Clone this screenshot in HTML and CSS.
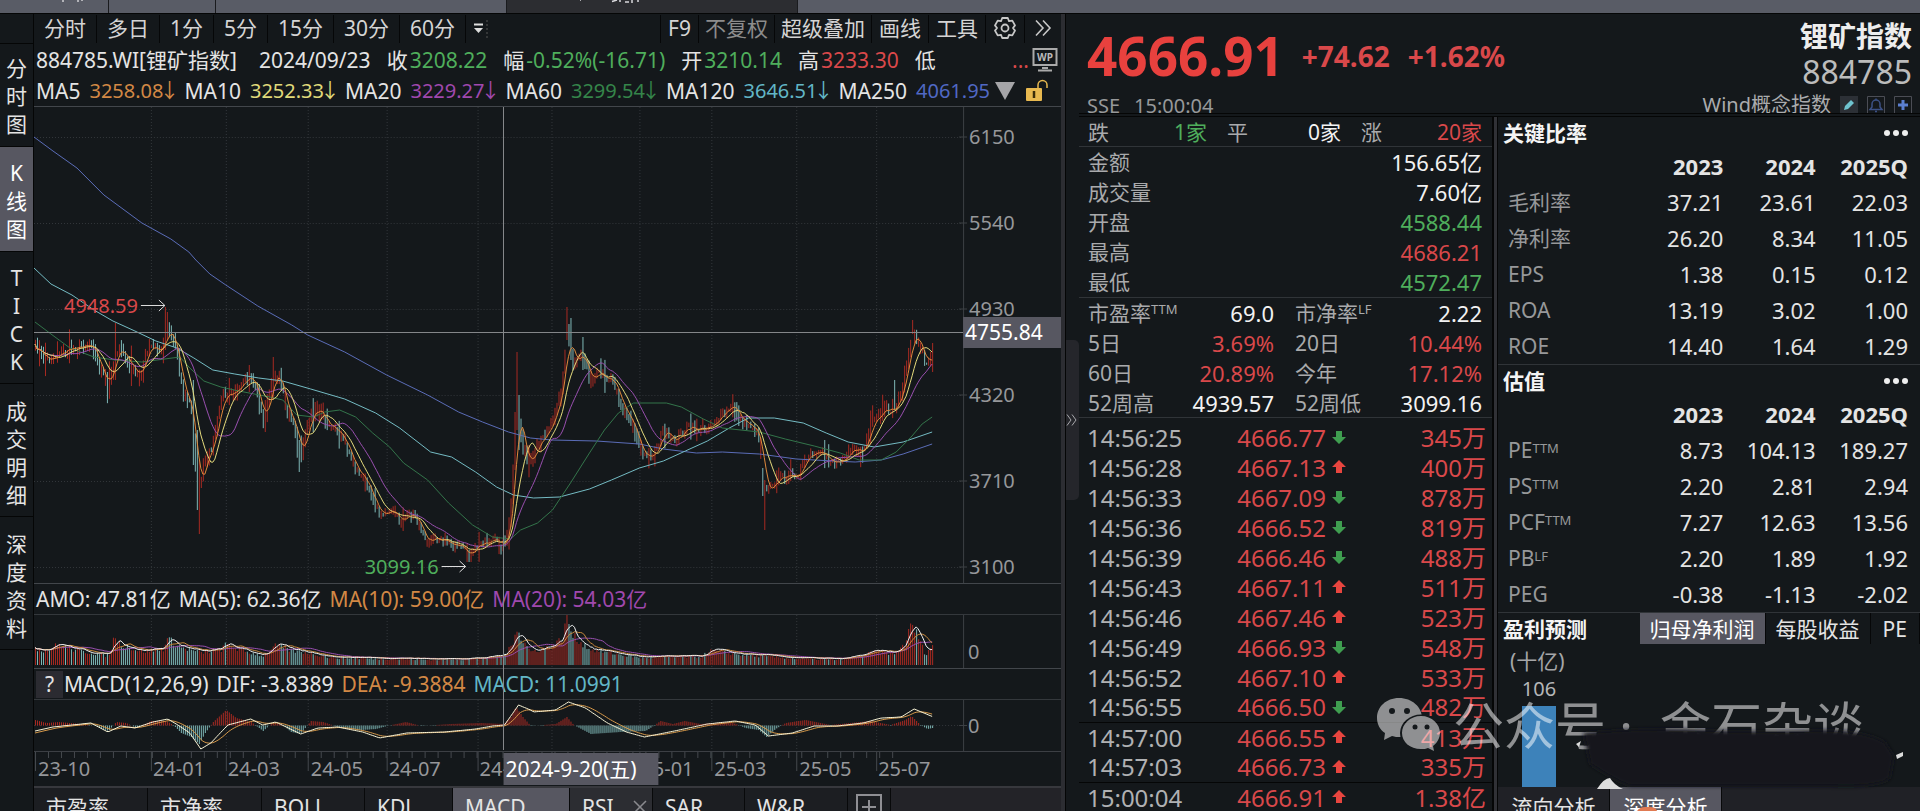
FILE: index.html
```
<!DOCTYPE html>
<html lang="zh-CN">
<head>
    <meta charset="utf-8">
    <title>锂矿指数 884785</title>
    <link rel="stylesheet" href="styles.css">
</head>
<body>
    <div class="window-tabs">
        <span class="wtab wtab-1"><svg width="24" height="2" viewBox="0 0 24 2"><path d="M1 0v2M16 0v2M20 0v1" stroke="#d0d0d4" stroke-width="1.500"/></svg></span>
        <span class="wtab wtab-2"></span>
        <span class="wtab wtab-3"></span>
        <span class="wtab wtab-current"><svg width="64" height="3" viewBox="0 0 64 3"><path d="M0 0v1M32 1.500l5-1.500M40 0v2M45 2h4M52 0v3M58 0v2" stroke="#d8d8dc" stroke-width="1.500"/></svg></span>
        <span class="wtab wtab-rest"></span>
    </div>

    <div class="app">
        <nav class="side">
            <div class="side-top"></div>
            <button class="side-btn">分<br>时<br>图</button>
            <button class="side-btn active">K<br>线<br>图</button>
            <button class="side-btn side-tick">T<br>I<br>C<br>K</button>
            <button class="side-btn side-long">成<br>交<br>明<br>细</button>
            <button class="side-btn side-long">深<br>度<br>资<br>料</button>
        </nav>

        <main class="chart-panel">
            <div class="toolbar">
                <button>分时</button>
                <button>多日</button>
                <button>1分</button>
                <button>5分</button>
                <button>15分</button>
                <button>30分</button>
                <button>60分</button>
                <svg class="more-periods" width="20" height="22" viewBox="0 0 20 22">
                    <path d="M6 6.500h9" stroke="#ddd" stroke-width="2"/>
                    <path d="M6 10h9l-4.500 5z" fill="#ddd"/>
                    <path d="M19 2v20" stroke="#555" stroke-dasharray="2 2"/>
                </svg>
                <span class="spacer"></span>
                <button class="narrow">F9</button>
                <button class="dim">不复权</button>
                <button class="wide">超级叠加</button>
                <button class="narrow">画线</button>
                <button class="narrow">工具</button>
                <button class="icon-btn" aria-label="设置">
                    <svg width="24" height="24" viewBox="0 0 24 24" fill="none" stroke="#c8c8c8" stroke-width="1.800" stroke-linejoin="round">
                        <path d="M9.200 2h5.600l1.200 3.200 3.300-.6 2.700 4.800L20 12l2 2.600-2.700 4.800-3.300-.6-1.200 3.200H9.200L8 18.800l-3.300.6L2 14.600 4 12 2 9.400l2.700-4.800 3.300.6z"/>
                        <circle cx="12" cy="12" r="3.500"/>
                    </svg>
                </button>
                <button class="icon-btn" aria-label="展开">
                    <svg width="20" height="20" viewBox="0 0 20 20" fill="none" stroke="#c8c8c8" stroke-width="1.600">
                        <path d="M3 2.500l7 7.500-7 7.500M10 2.500l7 7.500-7 7.500"/>
                    </svg>
                </button>
            </div>

            <div class="quote-line">
                <span class="q-name">884785.WI[锂矿指数]</span>
                <span class="q-date">2024/09/23</span>
                <span>收<b class="green">3208.22</b></span>
                <span>幅<b class="green">-0.52%(-16.71)</b></span>
                <span>开<b class="green">3210.14</b></span>
                <span>高<b class="red">3233.30</b></span>
                <span>低</span>
                <span class="q-more red">...</span>
                <svg width="26" height="26" viewBox="0 0 26 26">
                    <rect x="1.500" y="2" width="23" height="16" fill="none" stroke="#aaa" stroke-width="2"/>
                    <path d="M10 21h6M6 23.500h14" stroke="#aaa" stroke-width="2"/>
                    <text x="13" y="14" font-size="10" font-weight="700" text-anchor="middle" fill="#bbb">WP</text>
                </svg>
            </div>

            <div class="ma-line">
                <span>MA5</span><span class="orange">3258.08<i>↓</i></span>
                <span>MA10</span><span class="yellow">3252.33<i>↓</i></span>
                <span>MA20</span><span class="purple">3229.27<i>↓</i></span>
                <span>MA60</span><span class="dgreen">3299.54<i>↓</i></span>
                <span>MA120</span><span class="cyan">3646.51<i>↓</i></span>
                <span>MA250</span><span class="blue">4061.95</span>
                <svg class="ma-icons" width="58" height="24" viewBox="0 0 58 24">
                    <path d="M0 3h20L10 21z" fill="#a5a5a8"/>
                    <rect x="31" y="9" width="16" height="13" rx="1" fill="#e8b950"/>
                    <path d="M43 9V6a4.500 4.500 0 0 1 9 0v3" fill="none" stroke="#e8b950" stroke-width="1.500"/>
                    <path d="M39 12v7" stroke="#3a2c0a" stroke-width="2.500"/>
                </svg>
            </div>

            <div class="chart-stack">
                <svg class="pane price-pane" viewBox="33 107 1028 476" preserveAspectRatio="none">
                    <g id="grid-price" class="grid"></g>
                    <g class="axis">
                        <path d="M963.500 107V583M959 137h8M959 223h8M959 309h8M959 395h8M959 481h8M959 567h8"/>
                        <text x="969" y="144">6150</text>
                        <text x="969" y="230">5540</text>
                        <text x="969" y="316">4930</text>
                        <text x="969" y="402">4320</text>
                        <text x="969" y="488">3710</text>
                        <text x="969" y="574">3100</text>
                    </g>
                    <g id="candles"></g>
                    <g class="ma">
                        <polyline stroke="#5a6cb8" points="33,137 52,151 76,168 103,195 141,223 170,239 188,252 195,260 209,274 225,285 257,306 291,325 307,335 344,352 386,375 427,395 458,412 482,422 508,432 530,438 551,440 596,441 639,444 663,449 696,453 722,452 759,454 796,459 833,461 855,462 881,460 903,454 932,444"/>
                        <polyline stroke="#74bcc4" points="33,268 50,284 71,295 93,310 112,321 134,331 155,341 176,348 193,358 212,370 234,374 258,378 282,381 310,389 344,399 375,413 399,428 430,452 451,457 475,472 496,487 513,495 533,498 559,497 589,489 611,480 639,468 663,461 685,451 707,441 729,428 748,418 774,418 803,423 826,433 848,442 874,447 903,442 932,432"/>
                        <polyline stroke="#33744a" points="34,322 50,334 69,348 93,357 114,360 141,362 179,357 189,368 203,381 220,387 238,391 269,397 282,400 296,415 313,417 324,412 339,410 355,417 372,433 389,447 403,463 427,480 448,503 472,525 492,537 510,539 520,530 537,523 552,510 570,483 589,453 604,430 618,413 633,403 666,403 681,407 703,419 722,428 759,432 785,439 814,446 840,453 859,460 881,460 896,452 911,437 922,424 932,417"/>
                        <polyline id="ma20" stroke="#9a4fb0"/>
                        <polyline id="ma10" stroke="#e6dc7c"/>
                        <polyline id="ma5" stroke="#e08a3c"/>
                    </g>
                    <path class="cross" d="M33 332.500H963"/>
                    <text class="mark red" x="63" y="313">4948.59</text>
                    <path class="arrow" d="M140 305.500h24M158 300l6 5.500-6 5.500"/>
                    <text class="mark green" x="364" y="574">3099.16</text>
                    <path class="arrow" d="M441 566.500h24M459 561l6 5.500-6 5.500"/>
                    <rect x="963" y="317" width="98" height="31" fill="#575761"/>
                    <text class="tag" x="965" y="340">4755.84</text>
                </svg>

                <div class="pane-head">
                    <span>AMO: 47.81亿</span>
                    <span>MA(5): 62.36亿</span>
                    <span class="orange">MA(10): 59.00亿</span>
                    <span class="purple">MA(20): 54.03亿</span>
                </div>
                <svg class="pane vol-pane" viewBox="33 615 1028 53" preserveAspectRatio="none">
                    <g id="grid-vol" class="grid"></g>
                    <g id="volume"></g>
                    <g class="ma">
                        <polyline id="vma20" stroke="#9a4fb0"/>
                        <polyline id="vma10" stroke="#c98a3c"/>
                        <polyline id="vma5" stroke="#f2f2f2"/>
                    </g>
                    <g class="axis">
                        <path d="M963.500 615v53"/>
                        <text x="968" y="659">0</text>
                    </g>
                </svg>

                <div class="pane-head">
                    <button class="help">?</button>
                    <span>MACD(12,26,9)</span>
                    <span>DIF: -3.8389</span>
                    <span class="orange">DEA: -9.3884</span>
                    <span class="cyan">MACD: 11.0991</span>
                </div>
                <svg class="pane macd-pane" viewBox="33 700 1028 51" preserveAspectRatio="none">
                    <g id="grid-macd" class="grid"></g>
                    <g id="histogram"></g>
                    <g class="ma">
                        <polyline id="dea" stroke="#d79a4a"/>
                        <polyline id="dif" stroke="#fbf6d8"/>
                    </g>
                    <g class="axis">
                        <path d="M963.500 700v51M959 725.500h8"/>
                        <text x="968" y="733">0</text>
                    </g>
                </svg>
                <div class="cross-v"></div>

                <svg class="pane date-pane" viewBox="33 752 1028 34" preserveAspectRatio="none">
                    <g id="date-ticks" class="date-ticks"></g>
                    <g class="axis">
                        <text x="37" y="776">23-10</text>
                        <text x="152" y="776">24-01</text>
                        <text x="227" y="776">24-03</text>
                        <text x="310" y="776">24-05</text>
                        <text x="388" y="776">24-07</text>
                        <text x="479" y="776">24-09</text>
                        <text x="641" y="776">25-01</text>
                        <text x="714" y="776">25-03</text>
                        <text x="799" y="776">25-05</text>
                        <text x="878" y="776">25-07</text>
                    </g>
                    <rect x="503" y="753" width="155" height="32" fill="#575761"/>
                    <text class="tag" x="505" y="777">2024-9-20(五)</text>
                </svg>
            </div>

            <div class="indicator-tabs">
                <button class="w114">市盈率</button>
                <button class="w114">市净率</button>
                <button class="w103">BOLL</button>
                <button class="w88">KDJ</button>
                <button class="w117 active">MACD</button>
                <button class="w83 closable">RSI
                    <svg width="14" height="14" viewBox="0 0 14 14" stroke="#8a8a8e" stroke-width="1.500"><path d="M1 1l12 12M13 1L1 13"/></svg>
                </button>
                <button class="w92">SAR</button>
                <button class="w103">W&amp;R</button>
                <button class="add" aria-label="添加指标">
                    <svg width="26" height="26" viewBox="0 0 26 26" fill="none" stroke="#8f8f94" stroke-width="2">
                        <path d="M1 1h24v24H1zM13 6v14M6 13h14"/>
                    </svg>
                </button>
            </div>
        </main>

        <div class="splitter"></div>

        <aside class="quote-panel">
            <button class="collapse" aria-label="收起">
                <svg width="12" height="14" viewBox="0 0 12 14" fill="none" stroke="#a8a8ac">
                    <path d="M1 1.500l4 5.500-4 5.500M6 1.500l4 5.500-4 5.500"/>
                </svg>
            </button>

            <div class="quote-main">
                <header class="quote-head">
                    <div class="head-left">
                        <div class="price-row">
                            <span class="price">4666.91</span>
                            <span class="change">+74.62</span>
                            <span class="change">+1.62%</span>
                        </div>
                        <div class="exchange"><span>SSE</span><span>15:00:04</span></div>
                    </div>
                    <div class="head-right">
                        <div class="name">锂矿指数</div>
                        <div class="code">884785</div>
                        <div class="category">
                            <span>Wind概念指数</span>
                            <svg width="18" height="18" viewBox="0 0 18 18">
                                <rect width="18" height="18" fill="#2c3036"/>
                                <path d="M4 14l1-4 6-6 3 3-6 6z" fill="#6fc3cf"/>
                            </svg>
                            <svg width="18" height="18" viewBox="0 0 18 18" fill="none">
                                <path d="M.5.500h17v17H.5z" stroke="#4b4d55"/>
                                <path d="M3 13.500h12l-2-2.500V8a4 4 0 0 0-8 0v3zM8 15.500h2M9 4V2.500" stroke="#3c5186" stroke-width="1.500"/>
                            </svg>
                            <svg width="18" height="18" viewBox="0 0 18 18" fill="none">
                                <path d="M.5.500h17v17H.5z" stroke="#4b4d55"/>
                                <path d="M9 4v10M4 9h10" stroke="#5b7fd0" stroke-width="3"/>
                            </svg>
                        </div>
                    </div>
                </header>

                <div class="quote-body">
                    <section class="detail">
                        <div class="breadth">
                            <span>跌</span><b class="green">1家</b>
                            <span>平</span><b>0家</b>
                            <span>涨</span><b class="red">20家</b>
                        </div>
                        <div class="totals">
                            <span>金额</span><b>156.65亿</b>
                            <span>成交量</span><b>7.60亿</b>
                            <span>开盘</span><b class="green">4588.44</b>
                            <span>最高</span><b class="red">4686.21</b>
                            <span>最低</span><b class="green">4572.47</b>
                        </div>
                        <div class="pairs">
                            <span>市盈率<sup>TTM</sup></span><b>69.0</b><span>市净率<sup>LF</sup></span><b>2.22</b>
                            <span>5日</span><b class="red">3.69%</b><span>20日</span><b class="red">10.44%</b>
                            <span>60日</span><b class="red">20.89%</b><span>今年</span><b class="red">17.12%</b>
                            <span>52周高</span><b>4939.57</b><span>52周低</span><b>3099.16</b>
                        </div>
                        <table class="ticks">
                            <tbody id="ticks"></tbody>
                        </table>
                    </section>

                    <div class="column-split"></div>

                    <section class="ratios">
                        <div class="block">
                            <h2>关键比率 <button class="dots" aria-label="更多"><i></i><i></i><i></i></button></h2>
                            <table>
                                <tr><th></th><th>2023</th><th>2024</th><th>2025Q</th></tr>
                                <tr><td>毛利率</td><td>37.21</td><td>23.61</td><td>22.03</td></tr>
                                <tr><td>净利率</td><td>26.20</td><td>8.34</td><td>11.05</td></tr>
                                <tr><td>EPS</td><td>1.38</td><td>0.15</td><td>0.12</td></tr>
                                <tr><td>ROA</td><td>13.19</td><td>3.02</td><td>1.00</td></tr>
                                <tr><td>ROE</td><td>14.40</td><td>1.64</td><td>1.29</td></tr>
                            </table>
                        </div>
                        <div class="block">
                            <h2>估值 <button class="dots" aria-label="更多"><i></i><i></i><i></i></button></h2>
                            <table>
                                <tr><th></th><th>2023</th><th>2024</th><th>2025Q</th></tr>
                                <tr><td>PE<sup>TTM</sup></td><td>8.73</td><td>104.13</td><td>189.27</td></tr>
                                <tr><td>PS<sup>TTM</sup></td><td>2.20</td><td>2.81</td><td>2.94</td></tr>
                                <tr><td>PCF<sup>TTM</sup></td><td>7.27</td><td>12.63</td><td>13.56</td></tr>
                                <tr><td>PB<sup>LF</sup></td><td>2.20</td><td>1.89</td><td>1.92</td></tr>
                                <tr><td>PEG</td><td>-0.38</td><td>-1.13</td><td>-2.02</td></tr>
                            </table>
                        </div>
                        <div class="forecast">
                            <div class="forecast-head">
                                <h2>盈利预测</h2>
                                <button class="active">归母净利润</button>
                                <button>每股收益</button>
                                <button class="pe">PE</button>
                            </div>
                            <div class="unit">(十亿)</div>
                            <div class="bar-item">
                                <span>106</span>
                                <div class="bar"></div>
                            </div>
                        </div>
                        <div class="analysis-tabs">
                            <button>流向分析</button>
                            <button class="active">深度分析</button>
                        </div>
                    </section>
                </div>
            </div>

            <svg class="watermark" width="543" height="120" viewBox="1377 691 543 120">
                <defs>
                    <filter id="soft" x="-5%" y="-20%" width="110%" height="140%"><feGaussianBlur stdDeviation="2"/></filter>
                    <mask id="bubble">
                        <rect x="1370" y="690" width="90" height="70" fill="#fff"/>
                        <ellipse cx="1421" cy="733" rx="21" ry="18.500" fill="#000"/>
                    </mask>
                </defs>
                <g fill="#fff" opacity=".52">
                    <g mask="url(#bubble)">
                        <path d="M1399 698c-13 0-22 9-22 20 0 6 3 12 8 15l-1 7 8-4c3 1 5 1 8 1 12 0 22-8 22-19s-10-20-23-20z"/>
                    </g>
                    <path d="M1421 716c-11 0-19 8-19 17s8 16 19 16c3 0 5 0 7-1l6 3-1-5c4-3 7-8 7-13 0-9-8-17-19-17z"/>
                    <text class="mark-text" x="1453" y="745">公众号 · </text>
                    <text class="mark-text" x="1660" y="745">金石杂谈</text>
                </g>
                <g fill="#14181b">
                    <circle cx="1392" cy="711" r="3"/><circle cx="1407" cy="711" r="3"/>
                    <circle cx="1415" cy="727" r="2.500"/><circle cx="1427" cy="727" r="2.500"/>
                </g>
                <path d="M1583 733q60-6 120-3t120 0q40 0 62 12l9 14-4 22q-10 10-60 8l-200 0q-20-8-40-22z" fill="#14181b" filter="url(#soft)"/>
                <path d="M1576 744l5-3-2 6zM1597 789q7-11 13-11 4 7 13 11zM1896 755l7-3v4l-6 3z" fill="#dcdcdc"/>
                <path d="M1637 811q3-4 8-4h5q6 0 7 4z" fill="#e07a52"/>
            </svg>
        </aside>
    </div>

    <script src="chart.js"></script>
</body>
</html>
```
FILE: styles.css
```
* {
    box-sizing: border-box;
}
body {
    margin: 0;
    height: 100vh;
    overflow: hidden;
    display: flex;
    flex-direction: column;
    background: #14181b;
    color: #e4e4e4;
    font-family: "Noto Sans", "Noto Sans CJK SC", sans-serif;
    font-size: 21px;
    line-height: 30px;
}
button {
    margin: 0;
    padding: 0;
    border: none;
    background: none;
    color: inherit;
    font: inherit;
    cursor: pointer;
    white-space: nowrap;
}
b, i {
    font-weight: normal;
    font-style: normal;
}
h2 {
    margin: 0;
    font-size: 21px;
    line-height: 32px;
    font-weight: bold;
    color: #f4f4f4;
}

/* Text colours */
.red { color: #d9484a; fill: #d9484a; }
.green { color: #4fae5c; fill: #4fae5c; }
.dgreen { color: #35854a; }
.orange { color: #d28845; }
.yellow { color: #e0da7a; }
.purple { color: #a048ae; }
.cyan { color: #62b6c6; }
.blue { color: #5068c4; }

/* Window tabs on top */
.window-tabs {
    flex: none;
    display: flex;
    height: 13px;
    background: #595c66;
}
.wtab {
    display: flex;
    align-items: flex-start;
    justify-content: center;
    border-right: 1px solid #1a1b1e;
}
.wtab-1 {
    width: 109px;
    padding-left: 40px;
}
.wtab-2 { width: 107px; }
.wtab-3 { width: 291px; }
.wtab-current {
    width: 291px;
    padding-right: 80px;
    background: #2c2d31;
}
.wtab-rest {
    flex: 1;
    border: none;
}

.app {
    flex: 1;
    min-height: 0;
    display: flex;
    border-top: 1px solid #050606;
}

/* Left navigation */
.side {
    flex: none;
    width: 34px;
    display: flex;
    flex-direction: column;
    border-right: 1px solid #050606;
}
.side-top {
    height: 30px;
    border-bottom: 1px solid #050606;
}
.side-btn {
    height: 103px;
    padding-top: 1px;
    line-height: 28px;
    border-bottom: 1px solid #050606;
}
.side-btn.active {
    height: 105px;
    padding-top: 4px;
    background: #575761;
    color: #fff;
}
.side-tick {
    height: 132px;
    padding-top: 4px;
}
.side-long {
    height: 133px;
    padding-top: 5px;
}

/* Chart panel */
.chart-panel {
    flex: 1;
    min-width: 0;
    display: flex;
    flex-direction: column;
}
.toolbar {
    flex: none;
    display: flex;
    align-items: center;
    height: 30px;
}
.toolbar button {
    height: 28px;
    padding: 0 10px 2px;
    line-height: 26px;
    border-right: 1px solid #060708;
    color: #d4d4d4;
}
.toolbar .spacer {
    flex: 1;
    border-right: 1px solid #060708;
    height: 28px;
}
.toolbar .narrow { padding: 0 7px 2px; }
.toolbar .dim { padding: 0 6px 2px; color: #8c8c8c; }
.toolbar .wide { padding: 0 6px 2px; }
.toolbar .icon-btn {
    display: flex;
    align-items: center;
    padding: 0 7px 2px;
}
.toolbar .icon-btn:last-child {
    padding: 0 8px 2px;
    border: none;
}
.more-periods {
    margin-left: 2px;
}
.quote-line, .ma-line {
    flex: none;
    display: flex;
    align-items: center;
    height: 31px;
    padding: 0 3px 0 2px;
    white-space: nowrap;
}
.quote-line {
    gap: 16px;
}
.quote-line b {
    margin-left: 2px;
}
.q-name { margin-right: 6px; }
.q-more { margin-left: auto; }
.quote-line .q-more + svg { margin-left: -13px; }
.ma-line {
    gap: 9px;
    height: 32px;
    border-bottom: 1px solid #42464b;
}
.ma-line .orange, .ma-line .yellow, .ma-line .purple,
.ma-line .dgreen, .ma-line .cyan, .ma-line .blue {
    display: flex;
    font-size: 20px;
}
.ma-line i {
    width: 12px;
    display: flex;
    justify-content: center;
}
.ma-icons {
    margin-left: -4px;
}

.chart-stack {
    flex: none;
    position: relative;
    display: flex;
    flex-direction: column;
}
.pane {
    display: block;
    width: 100%;
    flex: none;
}
.price-pane { height: 476px; }
.vol-pane { height: 53px; }
.macd-pane { height: 51px; }
.date-pane {
    height: 35px;
    border-top: 1px solid #3c3f44;
}
.pane text {
    font-size: 20px;
}
.grid path {
    fill: none;
    stroke: #33373b;
    stroke-dasharray: 1 2;
}
.axis path {
    fill: none;
    stroke: #3c4045;
}
.axis text {
    fill: #96979a;
}
.date-ticks path {
    stroke: #45494e;
}
.ma polyline {
    fill: none;
    stroke-width: 1;
}
.cross {
    stroke: #85878a;
}
.arrow {
    fill: none;
    stroke: #ddd;
}
.pane .tag {
    fill: #fff;
    font-size: 21px;
}
.pane-head {
    display: flex;
    align-items: center;
    gap: 8px;
    height: 32px;
    padding-left: 2px;
    border-top: 1px solid #42464b;
    border-bottom: 1px solid #34383c;
    white-space: nowrap;
}
.pane-head .help {
    width: 27px;
    height: 27px;
    margin-right: -7px;
    line-height: 27px;
    background: #2b2b31;
}
.cross-v {
    position: absolute;
    left: 45.7%;
    top: 0;
    bottom: 36px;
    border-left: 1px solid #85878a;
}

.indicator-tabs {
    flex: none;
    display: flex;
    height: 39px;
    border-top: 2px solid #37383d;
    background: #232328;
}
.indicator-tabs button {
    padding-left: 12px;
    text-align: left;
    line-height: 36px;
    border-right: 1px solid #08090a;
    background: #1c1e22;
}
.indicator-tabs .active {
    background: #575761;
}
.w114 { width: 114px; }
.w103 { width: 103px; }
.w88 { width: 88px; }
.w117 { width: 117px; }
.w83 { width: 83px; }
.w92 { width: 92px; }
.indicator-tabs .closable {
    display: flex;
    justify-content: space-between;
    align-items: center;
    padding-right: 5px;
    background: #2c2d32;
}
.indicator-tabs .add {
    display: flex;
    padding: 6px 8px;
}

.splitter {
    flex: none;
    width: 4px;
    background: #2c2d32;
}

/* Quote panel */
.quote-panel {
    flex: none;
    width: 855px;
    position: relative;
    display: flex;
    border-left: 1px solid #050606;
}
.collapse {
    flex: none;
    align-self: flex-start;
    display: flex;
    align-items: center;
    width: 13px;
    height: 160px;
    margin-top: 326px;
    background: #25262b;
    border-radius: 0 5px 5px 0;
}
.quote-main {
    flex: 1;
    min-width: 0;
    display: flex;
    flex-direction: column;
}
.quote-head {
    flex: none;
    display: flex;
    justify-content: space-between;
    height: 99px;
    padding: 0 8px 0 8px;
    overflow: hidden;
}
.price-row {
    display: flex;
    align-items: center;
    gap: 18px;
    height: 84px;
    font-weight: bold;
    color: #e8413e;
}
.price {
    font-size: 53px;
    line-height: 60px;
}
.change {
    font-size: 28px;
    color: #d9484a;
}
.exchange {
    display: flex;
    gap: 14px;
    height: 16px;
    line-height: 16px;
    font-size: 20px;
    color: #97989a;
}
.head-right {
    text-align: right;
}
.name {
    padding-top: 4px;
    font-size: 28px;
    line-height: 36px;
    font-weight: bold;
    color: #ededed;
}
.code {
    font-size: 32px;
    line-height: 36px;
    color: #bcbcbc;
}
.category {
    display: flex;
    align-items: center;
    justify-content: flex-end;
    gap: 9px;
    height: 30px;
    font-size: 20px;
    color: #aaabad;
}
.quote-body {
    flex: 1;
    min-height: 0;
    display: flex;
    border-top: 4px double #050606;
}

.detail {
    width: 413px;
    color: #a9aaac;
}
.detail b {
    text-align: right;
    color: #f2f2f2;
}
.detail .red { color: #d9484a; }
.detail .green { color: #4fae5c; }
.breadth, .totals, .pairs {
    display: grid;
    padding: 0 10px 0 9px;
    border-bottom: 1px solid #303438;
}
.breadth {
    grid-template-columns: 21px 98px 20px 21px 93px 20px 21px 1fr;
    line-height: 28px;
    padding-top: 1px;
}
.breadth b + span {
    grid-column-start: 4;
}
.breadth b + span + b + span {
    grid-column-start: 7;
}
.totals {
    grid-template-columns: 1fr 1fr;
    line-height: 30px;
}
.totals b, .pairs b {
    font-size: 22px;
}
.pairs {
    grid-template-columns: 90px 96px 111px 1fr;
    height: 120px;
    line-height: 30px;
}
.pairs span:nth-child(4n + 3) {
    padding-left: 21px;
}
.totals, .pairs {
    white-space: nowrap;
}
sup {
    font-size: 13px;
    line-height: 0;
    vertical-align: 7px;
}

.ticks {
    width: 100%;
    margin-top: 4px;
    border-collapse: collapse;
    font-size: 24px;
}
.ticks td {
    height: 30px;
    padding: 0;
    line-height: 29px;
    text-align: right;
    color: #d9484a;
}
.ticks td:first-child {
    width: 120px;
    padding-left: 8px;
    text-align: left;
    color: #b0b1b3;
}
.ticks td:nth-child(2) { width: 127px; }
.ticks td:nth-child(3) {
    width: 26px;
    text-align: left;
    padding-left: 6px;
}
.ticks td:last-child { padding-right: 6px; }
.ticks .minute td { border-top: 1px solid #050606; }
.ticks svg { display: block; }

.column-split {
    width: 6px;
    border-left: 2px solid #050606;
    border-right: 1px solid #050606;
    background: #303136;
}

/* Ratio tables */
.ratios {
    flex: 1;
    min-width: 0;
    display: flex;
    flex-direction: column;
}
.block {
    border-bottom: 1px solid #303438;
    padding: 0 12px 0 5px;
}
.block h2 {
    display: flex;
    justify-content: space-between;
    height: 31px;
}
.dots {
    display: flex;
    align-items: center;
    gap: 3px;
}
.dots i {
    width: 6px;
    height: 6px;
    border-radius: 50%;
    background: #eee;
}
.block table {
    width: 100%;
    table-layout: fixed;
    border-collapse: collapse;
}
.block th, .block td {
    height: 36px;
    padding: 0;
    line-height: 36px;
    text-align: right;
    font-size: 22px;
}
.block tr > :first-child {
    width: 128px;
    padding-left: 5px;
    text-align: left;
    font-size: 21px;
    color: #97989a;
}
.block sup {
    vertical-align: 5px;
}
.forecast {
    height: 174px;
}
.forecast-head {
    display: flex;
    height: 31px;
    padding-left: 5px;
}
.forecast-head h2 {
    flex: 1;
}
.forecast-head button {
    padding: 0 10px;
    border-right: 1px solid #060708;
}
.forecast-head .active, .analysis-tabs .active {
    background: #575761;
    color: #fff;
}
.forecast-head .pe { padding: 0 12px; }
.unit {
    height: 32px;
    padding-left: 12px;
    line-height: 34px;
    color: #a5a6a8;
}
.bar-item {
    display: flex;
    flex-direction: column;
    align-items: center;
    gap: 4px;
    width: 34px;
    margin-left: 24px;
    font-size: 20px;
    line-height: 26px;
    color: #b5b6b8;
}
.bar {
    width: 34px;
    height: 81px;
    background: #3d82ba;
}
.analysis-tabs {
    flex: none;
    display: flex;
    height: 39px;
    background: #202126;
}
.analysis-tabs button {
    width: 112px;
    line-height: 36px;
    border-right: 1px solid #08090a;
}

.watermark {
    position: absolute;
    right: 0;
    bottom: 0;
    pointer-events: none;
}
.mark-text {
    font-size: 51px;
}
```
FILE: chart.js
```
var START = 34, END = 932, STEP = 2;
var RED = "#a92a22", CYAN = "#7fb9b8";
var MONTHS = [150, 225, 307, 386, 477, 551, 639, 711, 796, 876];

// [x, y] of closes
var closes = [[34,348],[45,360],[57,354],[69,348],[83,345],[90,342],[98,368],[106,388],[115,348],[120,352],[136,377],[148,347],
    [160,352],[165,325],[169,333],[176,355],[181,392],[189,405],[193,445],[197,495],[201,468],[210,448],[220,400],[227,390],
    [238,390],[249,375],[255,390],[262,422],[272,377],[277,373],[284,405],[293,428],[299,458],[305,428],[315,407],[327,422],
    [341,437],[355,470],[368,487],[379,517],[389,508],[399,523],[406,513],[417,522],[425,545],[434,535],[448,542],[468,556],
    [479,543],[492,540],[503,545],[508,525],[511,490],[515,405],[522,447],[528,465],[537,447],[551,420],[561,385],[566,330],
    [572,362],[581,350],[589,380],[598,372],[611,380],[622,407],[633,427],[641,457],[652,455],[663,430],[672,443],[685,428],
    [700,430],[713,422],[724,413],[732,405],[740,420],[752,427],[758,435],[761,465],[764,490],[770,484],[781,477],[796,475],
    [809,455],[822,455],[835,463],[850,450],[863,451],[870,427],[881,413],[896,407],[905,370],[911,335],[918,343],[925,363],[932,357]];

// x: [high, low] for the days that stand out
var spikes = {114: [323, 380], 164: [307, 350], 166: [312, 340], 192: [380, 465], 196: [430, 510], 198: [460, 534], 264: [400, 432],
    272: [357, 400], 248: [365, 392], 298: [440, 472], 516: [352, 430], 514: [412, 470], 518: [395, 450], 566: [307, 340],
    570: [318, 360], 582: [337, 370], 762: [468, 496], 764: [480, 530], 912: [320, 334], 932: [343, 372], 894: [380, 410]};

// bar heights
var volumes = [[34,16],[45,14],[57,20],[75,14],[90,12],[105,9],[111,14],[113,38],[115,22],[120,20],[140,13],[163,16],[165,26],[180,17],
    [200,12],[220,15],[225,20],[240,14],[262,9],[275,19],[290,14],[307,12],[330,7],[380,6],[440,5],[480,6],[503,9],[512,20],
    [515,42],[520,26],[530,13],[551,18],[562,26],[566,46],[572,28],[590,15],[620,10],[640,7],[700,8],[711,14],[740,10],[800,6],
    [840,5],[860,9],[876,13],[895,11],[905,22],[911,40],[918,27],[925,10],[932,20]];

var histogram = [[34,5],[45,2],[57,3],[80,1],[95,-1],[107,-6],[115,3],[125,2],[135,-3],[150,4],[165,4],[172,0],[180,-8],[190,-12],
    [198,-19],[204,-8],[212,3],[225,15],[235,7],[250,3],[262,-6],[272,3],[282,0],[290,-7],[299,-9],[310,4],[322,3],[340,-3],
    [360,-5],[375,-4],[386,-1],[405,3],[420,-1],[450,1],[480,2],[503,1],[510,8],[515,18],[522,8],[530,-1],[555,1],[566,8],
    [573,0],[590,-9],[620,-7],[645,-6],[660,4],[672,1],[684,4],[700,1],[730,3],[745,-3],[758,-5],[766,-12],[775,-4],[785,2],
    [805,5],[830,0],[870,4],[890,0],[905,5],[911,9],[920,0],[927,-4],[932,-3]];

var dif = [[34,731],[52,727],[90,723],[107,732],[120,726],[134,728],[152,722],[167,719],[177,725],[189,733],[200,749],[210,743],
    [227,725],[250,719],[262,725],[275,722],[300,734],[317,728],[337,727],[362,732],[379,738],[406,733],[444,732],[475,729],
    [492,726],[504,725],[518,705],[530,710],[533,712],[555,710],[568,702],[585,708],[607,723],[626,732],[644,737],[674,731],
    [707,724],[735,721],[755,725],[768,736],[792,733],[814,726],[837,726],[863,723],[881,718],[901,717],[914,709],[931,716]];

var seed = 7;
function random() {
    seed = (seed * 16807) % 2147483647;
    return seed / 2147483647;
}

// Value of a point list at every bar
function sample(points) {
    var out = [], k = 0;
    for (var x = START; x <= END; x += STEP) {
        while (k < points.length - 2 && points[k + 1][0] < x) k++;
        var a = points[k], b = points[k + 1];
        out.push(a[1] + (b[1] - a[1]) * (x - a[0]) / (b[0] - a[0]));
    }
    return out;
}

function average(values, n) {
    return values.map(function(v, i) {
        var part = values.slice(Math.max(0, i - n + 1), i + 1);
        return part.reduce(function(s, p) { return s + p; }, 0) / part.length;
    });
}

function drawLine(id, values) {
    document.getElementById(id).setAttribute("points", values.map(function(v, i) {
        return (START + i * STEP) + "," + v.toFixed(1);
    }).join(" "));
}

// Vertical strokes, grouped in one path per colour
function drawBars(id, bars) {
    var d = {};
    bars.forEach(function(b) {
        d[b.color] = (d[b.color] || "") + "M" + (b.x + 0.5) + " " + b.y1.toFixed(1) + "V" + b.y2.toFixed(1);
    });
    document.getElementById(id).innerHTML = Object.keys(d).map(function(c) {
        return '<path d="' + d[c] + '" stroke="' + c + '"/>';
    }).join("");
}

function drawGrid(id, top, bottom, rows) {
    var d = MONTHS.map(function(x) { return "M" + (x + 0.5) + " " + top + "V" + bottom; });
    rows.forEach(function(y) { d.push("M33 " + (y + 0.5) + "H963"); });
    document.getElementById(id).innerHTML = '<path d="' + d.join("") + '"/>';
}

drawGrid("grid-price", 107, 583, [137, 223, 309, 395, 481, 567]);
drawGrid("grid-vol", 615, 668, []);
drawGrid("grid-macd", 700, 751, [725]);

var price = sample(closes).map(function(y) { return y + (random() - 0.5) * 8; });
var up = price.map(function(y, i) { return i === 0 || y < price[i - 1] + 1 || random() < 0.2; });

drawBars("candles", price.map(function(y, i) {
    var x = START + i * STEP;
    var prev = i ? price[i - 1] : y;
    var calm = x > 330 && x < 500 || x > 640 && x < 860;
    // an occasional long wick among short ones
    var size = (calm ? 5 : 8) + (random() < 0.2 ? 9 : 0);
    var high = Math.min(y, prev) - random() * size;
    var low = Math.max(y, prev) + random() * size;
    if (spikes[x]) {
        high = spikes[x][0];
        low = spikes[x][1];
    }
    return {x: x, y1: high, y2: Math.min(low, 562), color: up[i] ? RED : CYAN};
}));
drawLine("ma5", average(price, 5));
drawLine("ma10", average(price, 10));
drawLine("ma20", average(price, 20));

var amount = sample(volumes).map(function(v) { return v * (0.85 + random() * 0.35); });
drawBars("volume", amount.map(function(v, i) {
    return {x: START + i * STEP, y1: 665 - v, y2: 665, color: up[i] ? RED : CYAN};
}));
[5, 10, 20].forEach(function(n) {
    drawLine("vma" + n, average(amount, n).map(function(v) { return 664 - v; }));
});

drawBars("histogram", sample(histogram).map(function(v, i) {
    return {x: START + i * STEP, y1: 725 - v, y2: 725.5, color: v > 0 ? RED : CYAN};
}));
var fast = sample(dif), slow = [];
fast.forEach(function(v, i) {
    slow.push(i ? slow[i - 1] + (v - slow[i - 1]) * 0.2 : v + 2);
});
drawLine("dif", fast);
drawLine("dea", slow);

// Date axis: long tick for a labelled month, short ones between
var ticks = "M34.5 752v19";
MONTHS.forEach(function(x) { ticks += "M" + (x + 0.5) + " 752v19"; });
for (var t = 47; t < 900; t += 13) ticks += "M" + (t + 0.5) + " 752v6";
document.getElementById("date-ticks").innerHTML = '<path d="' + ticks + '"/>';

// Trades: time, price, direction, amount
var trades = [
    ["14:56:25", "4666.77", "down", "345万"],
    ["14:56:28", "4667.13", "up", "400万"],
    ["14:56:33", "4667.09", "down", "878万"],
    ["14:56:36", "4666.52", "down", "819万"],
    ["14:56:39", "4666.46", "down", "488万"],
    ["14:56:43", "4667.11", "up", "511万"],
    ["14:56:46", "4667.46", "up", "523万"],
    ["14:56:49", "4666.93", "down", "548万"],
    ["14:56:52", "4667.10", "up", "533万"],
    ["14:56:55", "4666.50", "down", "482万"],
    ["14:57:00", "4666.55", "up", "413万"],
    ["14:57:03", "4666.73", "up", "335万"],
    ["15:00:04", "4666.91", "up", "1.38亿"]
];
var arrows = {
    up: '<svg width="14" height="14" viewBox="0 0 14 14"><path d="M7 0l7 7h-4v6H4V7H0z" fill="#e8453f"/></svg>',
    down: '<svg width="14" height="14" viewBox="0 0 14 14"><path d="M7 14l7-7h-4V1H4v6H0z" fill="#3f9e50"/></svg>'
};
document.getElementById("ticks").innerHTML = trades.map(function(t, i) {
    var newMinute = i > 0 && t[0].slice(0, 5) !== trades[i - 1][0].slice(0, 5);
    return "<tr" + (newMinute ? ' class="minute"' : "") + "><td>" + t[0] + "</td><td>" + t[1] +
        "</td><td>" + arrows[t[2]] + "</td><td>" + t[3] + "</td></tr>";
}).join("");
```
